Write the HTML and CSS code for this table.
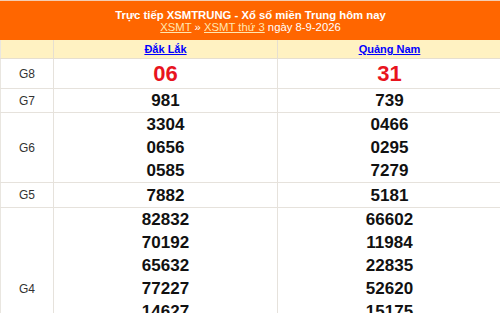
FILE: index.html
```html
<!DOCTYPE html>
<html lang="vi">
<head>
<meta charset="utf-8">
<link rel="stylesheet" href="styles.css">
</head>
<body>
<div class="box">
  <div class="title">
    <h2 class="title-main">Trực tiếp XSMTRUNG - Xổ số miền Trung hôm nay</h2>
    <div class="title-sub"><a href="#">XSMT</a> » <a href="#">XSMT thứ 3</a> ngày 8-9-2026</div>
  </div>
  <table class="kq">
    <colgroup><col class="c-label"><col class="c-prov"><col class="c-prov"></colgroup>
    <thead>
      <tr><th></th><th><a href="#">Đắk Lắk</a></th><th><a href="#">Quảng Nam</a></th></tr>
    </thead>
    <tbody>
      <tr class="g8"><td class="lbl">G8</td><td class="num red">06</td><td class="num red">31</td></tr>
      <tr class="g7"><td class="lbl">G7</td><td class="num">981</td><td class="num">739</td></tr>
      <tr><td class="lbl">G6</td><td class="num"><div>3304</div><div>0656</div><div>0585</div></td><td class="num"><div>0466</div><div>0295</div><div>7279</div></td></tr>
      <tr class="g5"><td class="lbl">G5</td><td class="num">7882</td><td class="num">5181</td></tr>
      <tr><td class="lbl">G4</td><td class="num"><div>82832</div><div>70192</div><div>65632</div><div>77227</div><div>14627</div><div>38112</div><div>90541</div></td><td class="num"><div>66602</div><div>11984</div><div>22835</div><div>52620</div><div>15175</div><div>40213</div><div>78509</div></td></tr>
    </tbody>
  </table>
</div>
</body>
</html>
```

FILE: styles.css
```css
html, body { margin: 0; padding: 0; background: #fff; }
body { font-family: "Liberation Sans", Arial, sans-serif; width: 501px; }
.box { border-top: 1px solid #f3cdb3; }
.title {
  background: #ff6600;
  color: #fff;
  text-align: center;
  height: 39px;
  box-sizing: border-box;
  padding-top: 8px;
}
.title-main { margin: 0; font-size: 11.3px; font-weight: bold; line-height: 12px; }
.title-sub { font-size: 11.3px; line-height: 12px; }
.title-sub a { color: #ffe6b0; text-decoration: underline; }
.kq { width: 501px; border-collapse: collapse; table-layout: fixed; }
.c-label { width: 53px; }
.c-prov { width: 224px; }
.kq th {
  background: #fff2c2;
  height: 18px;
  padding: 0;
  font-size: 11px;
  font-weight: bold;
  border: 1px solid #e6dfd0;
  border-top: none;
}
.kq th a { color: #0000ff; text-decoration: underline; }
.kq td { border: 1px solid #e6e2dc; padding: 0; text-align: center; }
.kq tr > :first-child { border-left: 1px solid #e9e6e0; }
.lbl { font-size: 12px; color: #333; }
.num { font-size: 17px; font-weight: bold; color: #111; line-height: 23px; padding: 0; }
.num div { line-height: 23px; }
.g8 td { height: 29px; }
.g7 td { height: 23px; }
.g5 td { height: 24px; }
.red { color: #e8141e; font-size: 22px; }
```
